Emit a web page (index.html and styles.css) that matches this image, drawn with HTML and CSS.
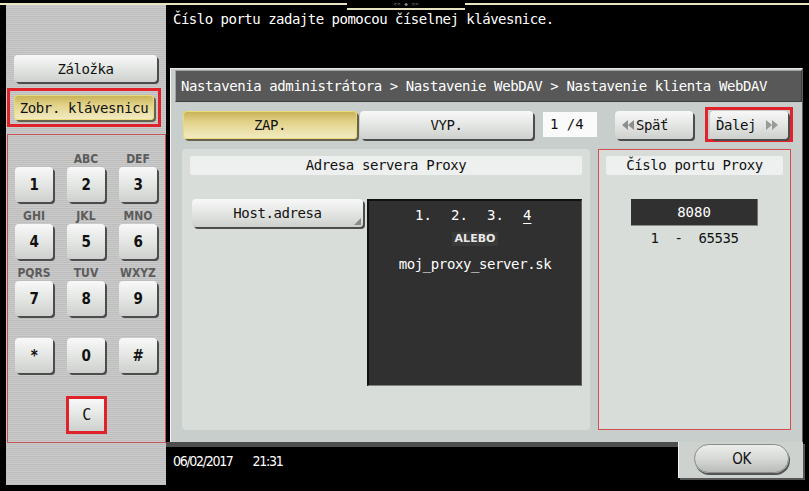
FILE: index.html
```html
<!DOCTYPE html>
<html lang="sk">
<head>
    <meta charset="UTF-8" />
    <title>Nastavenie klienta WebDAV</title>
    <link rel="stylesheet" href="styles.css">
</head>
<body>

    <!-- horná lišta -->
    <div class="topline"><span class="grip">&lt;&lt; &#9670; &gt;&gt;</span></div>

    <div class="main">

        <!-- ĽAVÝ PANEL -->
        <aside class="side">
            <div class="btn tab-btn">Záložka</div>
            <div class="hl hl-keys"><div class="btn btn-yellow keys-btn">Zobr. klávesnicu</div></div>

            <div class="keypad">
                <div class="key-grid">
                    <div class="cell"><span class="letters"></span><div class="btn key">1</div></div>
                    <div class="cell"><span class="letters">ABC</span><div class="btn key">2</div></div>
                    <div class="cell"><span class="letters">DEF</span><div class="btn key">3</div></div>
                    <div class="cell"><span class="letters">GHI</span><div class="btn key">4</div></div>
                    <div class="cell"><span class="letters">JKL</span><div class="btn key">5</div></div>
                    <div class="cell"><span class="letters">MNO</span><div class="btn key">6</div></div>
                    <div class="cell"><span class="letters">PQRS</span><div class="btn key">7</div></div>
                    <div class="cell"><span class="letters">TUV</span><div class="btn key">8</div></div>
                    <div class="cell"><span class="letters">WXYZ</span><div class="btn key">9</div></div>
                    <div class="cell"><span class="letters"></span><div class="btn key">*</div></div>
                    <div class="cell"><span class="letters"></span><div class="btn key">0</div></div>
                    <div class="cell"><span class="letters"></span><div class="btn key">#</div></div>
                </div>
                <div class="hl hl-clear"><div class="btn key-c">C</div></div>
            </div>
        </aside>

        <!-- PRACOVNÁ PLOCHA -->
        <section class="work">
            <p class="message">Číslo portu zadajte pomocou číselnej klávesnice.</p>

            <div class="dialog">
                <div class="crumbs">Nastavenia administrátora &gt; Nastavenie WebDAV &gt; Nastavenie klienta WebDAV</div>

                <div class="toolbar">
                    <div class="btn btn-yellow zap">ZAP.</div>
                    <div class="btn vyp">VYP.</div>
                    <div class="page">1 /4</div>
                    <div class="btn prev">
                        <svg width="12" height="10" viewBox="0 0 12 10"><path d="M6 0L0 5L6 10ZM12 0L6 5L12 10Z" fill="#8e8e8e"/></svg>
                        <span>Späť</span>
                    </div>
                    <div class="hl hl-next">
                        <div class="btn next">
                            <span>Ďalej</span>
                            <svg width="12" height="10" viewBox="0 0 12 10"><path d="M0 0L6 5L0 10ZM6 0L12 5L6 10Z" fill="#9a9a9a"/></svg>
                        </div>
                    </div>
                </div>

                <div class="content">
                    <div class="panel">
                        <div class="caption">Adresa servera Proxy</div>
                        <div class="host-row">
                            <div class="btn host-btn">Host.adresa</div>
                            <div class="screen-box">
                                <div class="octets">
                                    <span>1.</span><span>2.</span><span>3.</span><span class="current">4</span>
                                </div>
                                <span class="alebo">ALEBO</span>
                                <div class="host-name">moj_proxy_server.sk</div>
                            </div>
                        </div>
                    </div>

                    <div class="panel port">
                        <div class="caption">Číslo portu Proxy</div>
                        <div class="port-value">8080</div>
                        <div class="range"><span>1</span><span>-</span><span>65535</span></div>
                    </div>
                </div>
            </div>

            <div class="footer">
                <div class="clock">06/02/2017<span class="time">21:31</span></div>
                <div class="ok-area"><div class="btn ok">OK</div></div>
            </div>
        </section>
    </div>

</body>
</html>
```

FILE: styles.css
```css
/* Bez posuvníkov */
html, body {
    overflow: hidden;
}

body {
    margin: 0;
    padding: 0;
    width: 809px;
    height: 491px;
    background: #000;
    font-family: "DejaVu Sans Mono", monospace;
    color: #111;
}

/* Horná lišta */
.topline {
    height: 2px;
    margin-top: 3px;
    background: #e8e3c2;
    position: relative;
}

.grip {
    position: absolute;
    left: 347px;
    top: -3px;
    width: 118px;
    height: 8px;
    background: #000;
    border-bottom: 2px solid #e8e3c2;
    color: #8a8a8a;
    font-size: 6px;
    line-height: 8px;
    text-align: center;
}

.main {
    display: flex;
    height: 486px;
}

/* Ľavý panel */
.side {
    width: 160px;
    height: 480px;
    margin-left: 6px;
    padding-top: 50px;
    box-sizing: border-box;
    background: repeating-linear-gradient(to bottom, #cbcbcb 0 1px, #bdbdbd 1px 2px);
    display: flex;
    flex-direction: column;
}

/* Tlačidlá */
.btn {
    display: flex;
    align-items: center;
    justify-content: center;
    box-sizing: border-box;
    border-radius: 4px;
    background: linear-gradient(#f7f8f7, #e4e6e4 50%, #cdd0cd);
    box-shadow: 2px 2px 0 #4c4c4c;
    font-size: 14px;
    letter-spacing: -0.4px;
    color: #111;
    white-space: nowrap;
}

.btn-yellow {
    background: linear-gradient(#c7b054, #e2d38a 40%, #f3ecc6);
    box-shadow: inset 0 0 0 1px #eadb78, 2px 2px 0 #66624e;
}

.hl {
    border: 3px solid #e0232b;
    box-sizing: border-box;
}

.tab-btn {
    width: 143px;
    height: 27px;
    margin-left: 8px;
}

.hl-keys {
    width: 154px;
    height: 39px;
    margin: 6px 0 0 1px;
    padding: 4px;
}

.keys-btn {
    height: 25px;
}

/* Číselná klávesnica */
.keypad {
    width: 159px;
    height: 309px;
    margin: 7px 0 0 1px;
    border: 1px solid #c25454;
    box-sizing: border-box;
}

.key-grid {
    display: grid;
    grid-template-columns: repeat(3, 38px);
    column-gap: 14px;
    row-gap: 6px;
    padding: 16px 0 0 7px;
}

.cell {
    display: flex;
    flex-direction: column;
    align-items: center;
}

.letters {
    height: 16px;
    line-height: 16px;
    font-family: "DejaVu Sans Condensed", "DejaVu Sans", sans-serif;
    font-weight: bold;
    font-size: 12px;
    color: #5c5c5c;
}

.key {
    width: 38px;
    height: 35px;
    font-family: "DejaVu Sans Condensed", "DejaVu Sans", sans-serif;
    font-weight: bold;
    font-size: 15px;
}

.hl-clear {
    width: 41px;
    height: 38px;
    margin: 23px auto 0;
}

.key-c {
    height: 100%;
    border-radius: 0;
    box-shadow: none;
    font-size: 15px;
}

/* Pracovná plocha */
.work {
    flex: 1;
    display: flex;
    flex-direction: column;
}

.message {
    margin: 0;
    height: 63px;
    padding: 6px 0 0 7px;
    box-sizing: border-box;
    color: #fff;
    font-size: 14px;
    line-height: 16px;
    letter-spacing: -0.5px;
}

.dialog {
    width: 633px;
    height: 374px;
    margin-left: 4px;
    padding: 1px 0 0 4px;
    box-sizing: border-box;
    background: #c8cecb;
    border-top: 1px solid #e6e8e6;
    border-left: 1px solid #f2f2f2;
    border-right: 1px solid #5e5e5e;
}

.crumbs {
    height: 32px;
    box-sizing: border-box;
    padding-left: 5px;
    background: #585858;
    border: 1px solid #a3a3a3;
    border-right-color: #404040;
    border-bottom-color: #404040;
    color: #fff;
    font-size: 14px;
    line-height: 30px;
    letter-spacing: -0.4px;
    white-space: nowrap;
}

.toolbar {
    display: flex;
    align-items: center;
    height: 35px;
    margin-top: 5px;
    padding-left: 8px;
}

.zap {
    width: 174px;
    height: 28px;
}

.vyp {
    width: 173px;
    height: 28px;
    margin-left: 3px;
}

.page {
    width: 54px;
    height: 25px;
    margin-left: 10px;
    padding-left: 7px;
    box-sizing: border-box;
    background: #fafafa;
    font-size: 14px;
    line-height: 25px;
}

.prev {
    width: 78px;
    height: 28px;
    margin-left: 18px;
    gap: 2px;
    justify-content: flex-start;
    padding-left: 7px;
}

.hl-next {
    width: 88px;
    height: 35px;
    margin-left: 12px;
    padding: 1px 2px;
}

.next {
    height: 28px;
    gap: 10px;
    justify-content: flex-start;
    padding-left: 6px;
}

/* Obsah */
.content {
    display: flex;
    gap: 8px;
    height: 281px;
    margin: 7px 0 0 7px;
}

.panel {
    width: 408px;
    padding: 7px 8px;
    box-sizing: border-box;
    background: #d8ddda;
    border-radius: 4px;
}

.caption {
    height: 19px;
    background: #eef0ef;
    border-radius: 2px;
    text-align: center;
    font-size: 14px;
    line-height: 19px;
    letter-spacing: -0.4px;
}

.host-row {
    display: flex;
    align-items: flex-start;
    margin: 24px 0 0 2px;
}

.host-btn {
    width: 171px;
    height: 28px;
    position: relative;
}

.host-btn::after {
    content: "";
    position: absolute;
    right: 2px;
    bottom: 2px;
    border-left: 7px solid transparent;
    border-bottom: 7px solid #8a8a8a;
}

.screen-box {
    width: 215px;
    height: 187px;
    margin-left: 4px;
    box-sizing: border-box;
    background: #303030;
    border-top: 2px solid #111;
    border-left: 2px solid #111;
    border-bottom: 1px solid #808080;
    border-right: 1px solid #606060;
    color: #fff;
    display: flex;
    flex-direction: column;
    align-items: center;
    padding-top: 4px;
}

.octets {
    display: flex;
    gap: 20px;
    font-size: 14px;
    line-height: 20px;
    padding-left: 4px;
}

.octets span {
    width: 16px;
}

.current {
    text-decoration: underline;
    text-underline-offset: 3px;
}

.alebo {
    margin-top: 7px;
    padding: 0 3px;
    background: #393939;
    color: #e8e8e8;
    font-family: "DejaVu Sans", sans-serif;
    font-weight: bold;
    font-size: 11px;
    line-height: 14px;
}

.host-name {
    margin-top: 8px;
    font-size: 14px;
    letter-spacing: -0.4px;
    line-height: 20px;
}

.port {
    width: 193px;
    padding: 6px 7px;
    border: 1px solid #d35050;
    border-radius: 0;
}

.port-value {
    width: 127px;
    height: 27px;
    margin: 24px auto 0;
    box-sizing: border-box;
    background: #303030;
    border-bottom: 1px solid #8a8a8a;
    border-right: 1px solid #707070;
    color: #fff;
    text-align: center;
    font-size: 14px;
    line-height: 26px;
}

.range {
    display: flex;
    justify-content: center;
    gap: 16px;
    margin-top: 4px;
    font-size: 14px;
    line-height: 16px;
    letter-spacing: -0.4px;
}

/* Pätička */
.footer {
    flex: 1;
    display: flex;
}

.clock {
    flex: 1;
    border-top: 5px solid #4e4e4e;
    padding-left: 7px;
    color: #fff;
    font-family: "DejaVu Sans Condensed", "DejaVu Sans", sans-serif;
    font-size: 14px;
    letter-spacing: -1.3px;
    line-height: 28px;
}

.time {
    margin-left: 20px;
}

.ok-area {
    width: 125px;
    height: 36px;
    margin-right: 6px;
    padding: 2px 0 0 15px;
    box-sizing: border-box;
    background: #cdd2cf;
    border-left: 1px solid #f2f2f2;
    box-shadow: 2px 2px 0 #555;
}

.ok {
    width: 95px;
    height: 29px;
    border-radius: 15px;
    border: 1px solid #8c8c8c;
    background: linear-gradient(#eceeec, #d6d9d6 50%, #b9bcb9);
    box-shadow: 1px 2px 0 #555;
    font-family: "DejaVu Sans Condensed", "DejaVu Sans", sans-serif;
    font-size: 15px;
}
```
